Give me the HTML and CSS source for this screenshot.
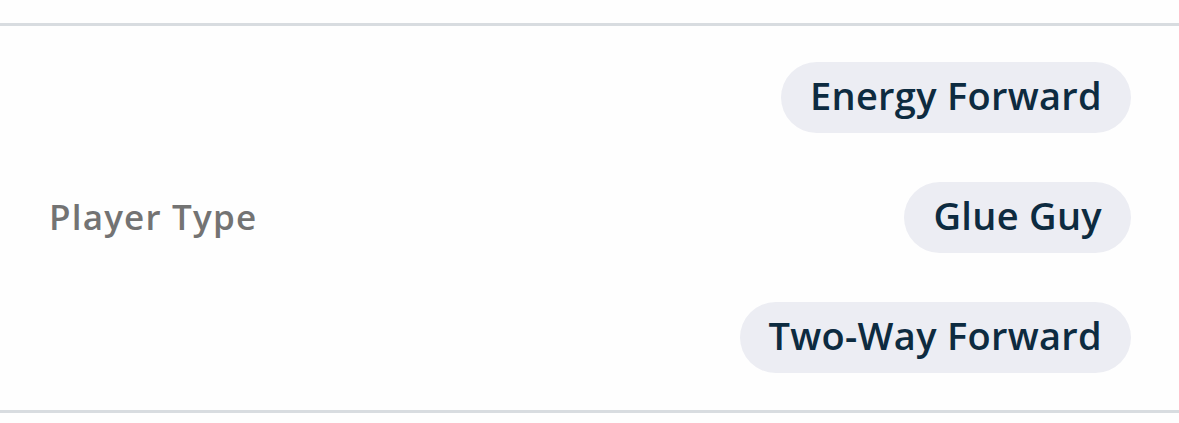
FILE: index.html
```html
<!DOCTYPE html>
<html lang="en">
  <head>
    <meta charset="UTF-8" />
    <meta name="viewport" content="width=device-width, initial-scale=1.0" />
    <title>Player Profile</title>
    <link rel="stylesheet" href="styles.css">
  </head>
  <body>
    <div class="attr-row">
      <span class="attr-label">Player Type</span>
      <div class="chip-list">
        <span class="chip">Energy Forward</span>
        <span class="chip">Glue Guy</span>
        <span class="chip">Two-Way Forward</span>
      </div>
    </div>
  </body>
</html>
```

FILE: styles.css
```css
* {
  box-sizing: border-box;
  margin: 0;
  padding: 0;
}
body {
  font-family: "Open Sans", sans-serif;
  background-color: #fefefe;
  padding-top: 23px;
}
.attr-row {
  display: flex;
  justify-content: space-between;
  align-items: center;
  border-top: 3px solid #d8dce0;
  border-bottom: 3px solid #d8dce0;
  padding: 36px 48px 37px 49px;
}
.attr-label {
  font-size: 35px;
  font-weight: 600;
  letter-spacing: 1.2px;
  color: #737373;
  padding-bottom: 3px;
}
.chip-list {
  display: flex;
  flex-direction: column;
  align-items: flex-end;
  gap: 49px;
}
.chip {
  display: block;
  height: 71px;
  line-height: 67px;
  padding: 0 29px 4px;
  border-radius: 36px;
  background: #ecedf3;
  color: #0d2b40;
  font-size: 38px;
  font-weight: 600;
  letter-spacing: 0.3px;
}
```
